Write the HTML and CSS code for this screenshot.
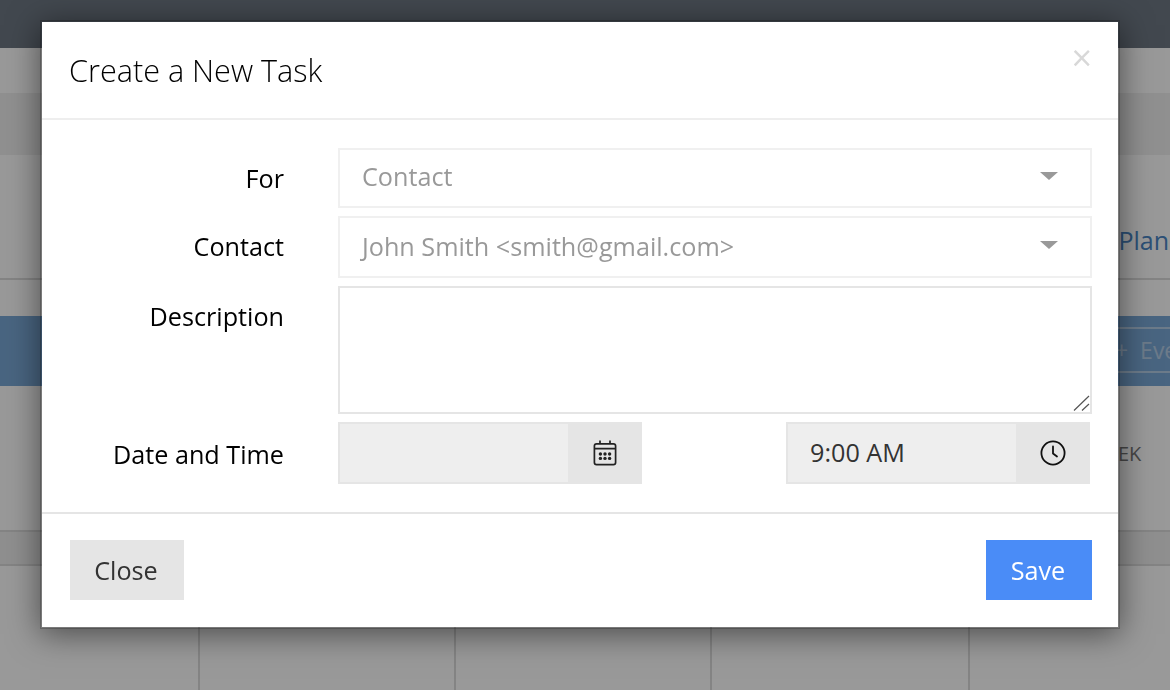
FILE: index.html
```html
<!DOCTYPE html>
<html lang="en">
<head>
  <meta charset="UTF-8" />
  <title>Create a New Task</title>
  <link rel="stylesheet" href="styles.css">
</head>
<body>

<!-- page behind the dialog -->
<div class="page">
  <div class="topbar"></div>
  <div class="band-light"></div>
  <div class="band-mid"></div>
  <div class="tabs"><a class="tabs-left">s</a><a class="tabs-right">Plan</a></div>
  <div class="gap"></div>
  <div class="blue-bar"><span class="add-btn">+ &nbsp;Event</span></div>
  <div class="range"><span>EK</span></div>
  <div class="days"></div>
  <div class="cal-grid">
    <div class="cell cell-a"></div>
    <div class="cell cell-b"></div>
    <div class="cell cell-b"></div>
    <div class="cell cell-c"></div>
    <div class="cell"></div>
  </div>
</div>

<div class="backdrop"></div>

<div class="modal">
  <div class="modal-header">
    <h4>Create a New Task</h4>
    <span class="close">×</span>
  </div>

  <form class="modal-body">
    <label class="for-label">For</label>
    <div class="select">
      <span>Contact</span>
      <svg class="caret" width="18" height="8" viewBox="0 0 18 8"><path d="M0 0h18l-9 8z" fill="#999"/></svg>
    </div>

    <label class="contact-label">Contact</label>
    <div class="select select-contact">
      <span>John Smith &lt;smith@gmail.com&gt;</span>
      <svg class="caret" width="18" height="8" viewBox="0 0 18 8"><path d="M0 0h18l-9 8z" fill="#999"/></svg>
    </div>

    <label class="desc-label">Description</label>
    <div class="textarea-wrap">
      <textarea></textarea>
      <svg class="grip" width="17" height="16" viewBox="0 0 17 16" fill="none" stroke="#555" stroke-width="1.2">
        <path d="M1 15.5L16 1M9 15.5L16 9"/>
      </svg>
    </div>

    <label class="date-label">Date and Time</label>
    <div class="date-row">
      <div class="input-group">
        <div class="input-value"></div>
        <div class="addon">
          <svg width="24" height="26" viewBox="0 0 24 26" fill="none" stroke="#222" stroke-width="1.7">
            <rect x="1.4" y="3.9" width="21.2" height="20.7" rx="2.2"/>
            <path d="M1.4 8.6h21.2M7 0.5v3.4M17 0.5v3.4"/>
            <g fill="#222" stroke="none">
              <circle cx="7.4" cy="14" r="1.7"/><circle cx="12" cy="14" r="1.7"/><circle cx="16.6" cy="14" r="1.7"/>
              <circle cx="7.4" cy="18.4" r="1.7"/><circle cx="12" cy="18.4" r="1.7"/><circle cx="16.6" cy="18.4" r="1.7"/>
            </g>
          </svg>
        </div>
      </div>
      <div class="input-group">
        <div class="input-value">9:00 AM</div>
        <div class="addon">
          <svg width="26" height="26" viewBox="0 0 26 26" fill="none" stroke="#111" stroke-width="1.8">
            <circle cx="13" cy="13" r="11.6"/>
            <path d="M13 6.5v7l4 3" stroke-linecap="round" stroke-linejoin="round"/>
          </svg>
        </div>
      </div>
    </div>
  </form>

  <div class="modal-footer">
    <button type="button" class="btn btn-close">Close</button>
    <button type="button" class="btn btn-save">Save</button>
  </div>
</div>

</body>
</html>
```

FILE: styles.css
```css
* {
  box-sizing: border-box;
}
html, body {
  margin: 0;
  height: 100%;
  overflow: hidden;
}
body {
  font-family: 'Open Sans', sans-serif;
  background-color: #fff;
  color: #000;
}

/* page behind */
.page {
  height: 690px;
  overflow: hidden;
}
.topbar {
  height: 48px;
  background-color: #6f7884;
}
.band-light {
  height: 45px;
  background-color: #fff;
}
.band-mid {
  height: 62px;
  background-color: #f0f0f0;
}
.tabs {
  height: 125px;
  display: flex;
  justify-content: space-between;
  align-items: flex-end;
  padding-bottom: 21px;
  border-bottom: 2px solid #ddd;
  font-size: 25px;
  line-height: 33px;
  color: #4a86c5;
}
.tabs-left {
  margin-left: -12px;
}
.tabs-right {
  margin-right: 1px;
}
.gap {
  height: 36px;
}
.blue-bar {
  height: 70px;
  background-color: #7ba9d8;
  padding: 11px 0 0 1099px;
  white-space: nowrap;
}
.add-btn {
  display: block;
  width: 113px;
  height: 46px;
  border: 2px solid #b5cde6;
  border-right: 0;
  padding-left: 14px;
  line-height: 42px;
  font-size: 23px;
  color: #b5cde6;
}
.range {
  height: 144px;
  padding: 54px 0 0 1118px;
  font-size: 20px;
  line-height: 28px;
  color: #777;
}
.days {
  height: 36px;
  background-color: #eee;
  border-top: 2px solid #ddd;
  border-bottom: 2px solid #ddd;
}
.cal-grid {
  display: flex;
  height: 125px;
}
.cell {
  flex: 1;
  border-right: 2px solid #ddd;
}
.cell-a {
  flex: 0 0 200px;
}
.cell-b {
  flex: 0 0 256px;
}
.cell-c {
  flex: 0 0 258px;
}
.cal-grid .cell:last-child {
  border-right: 0;
}
.backdrop {
  position: fixed;
  inset: 0;
  background-color: rgba(0,0,0,0.4);
}

/* dialog */
.modal {
  position: absolute;
  left: 40px;
  top: 20px;
  width: 1080px;
  height: 609px;
  background-color: #fff;
  background-clip: padding-box;
  border: 2px solid rgba(0,0,0,0.2);
  box-shadow: 0 5px 30px rgba(0,0,0,0.5);
}
.modal-header {
  position: relative;
  height: 98px;
  padding: 27px 27px 0;
  border-bottom: 2px solid #eee;
}
.modal-header h4 {
  margin: 0;
  font-size: 30.6px;
  font-weight: 300;
  line-height: 42px;
}
.close {
  position: absolute;
  right: 26px;
  top: 12px;
  font-size: 36px;
  line-height: 48px;
  color: #d8d8d8;
}
.modal-body {
  display: grid;
  grid-template-columns: 242px 754px;
  column-gap: 54px;
  grid-template-rows: 60px 62px 128px 62px;
  row-gap: 8px;
  height: 394px;
  padding-top: 28px;
  border-bottom: 2px solid #e5e5e5;
  font-size: 25.2px;
}
.modal-body label {
  text-align: right;
  line-height: 33px;
}
.for-label {
  padding-top: 14px;
}
.contact-label {
  padding-top: 14px;
}
.desc-label {
  padding-top: 14px;
}
.date-label {
  padding-top: 16px;
}
.select {
  display: flex;
  justify-content: space-between;
  align-items: center;
  padding: 0 32px 0 22px;
  border: 2px solid #f0f0f0;
  color: #999;
}
.select span {
  margin-bottom: 4px;
}
.select-contact span {
  margin-bottom: 2px;
}
.caret {
  margin-top: -4px;
}
.textarea-wrap {
  position: relative;
}
textarea {
  display: block;
  width: 100%;
  height: 128px;
  margin: 0;
  padding: 10px 22px;
  border: 2px solid #e5e5e5;
  border-radius: 0;
  outline: none;
  resize: none;
  font-family: 'Open Sans', sans-serif;
  font-size: 25.2px;
}
.grip {
  position: absolute;
  right: 2px;
  bottom: 3px;
}
.date-row {
  display: flex;
  justify-content: space-between;
  padding-right: 2px;
}
.input-group {
  display: flex;
  width: 304px;
  border: 2px solid #e5e5e5;
}
.input-value {
  flex: 1;
  padding-left: 22px;
  background-color: #eee;
  color: #333;
  line-height: 56px;
}
.addon {
  flex: 0 0 72px;
  display: flex;
  align-items: center;
  justify-content: center;
  padding-left: 2px;
  background-color: #e5e5e5;
}
.modal-footer {
  display: flex;
  justify-content: space-between;
  padding: 26px 26px 0 28px;
}
.btn {
  height: 60px;
  padding: 0 2px 0 0;
  border: none;
  border-radius: 0;
  font-family: 'Open Sans', sans-serif;
  font-size: 25.2px;
}
.btn-close {
  width: 114px;
  background-color: #e5e5e5;
  color: #333;
}
.btn-save {
  width: 106px;
  background-color: #4a8cf7;
  color: #fff;
}
```
